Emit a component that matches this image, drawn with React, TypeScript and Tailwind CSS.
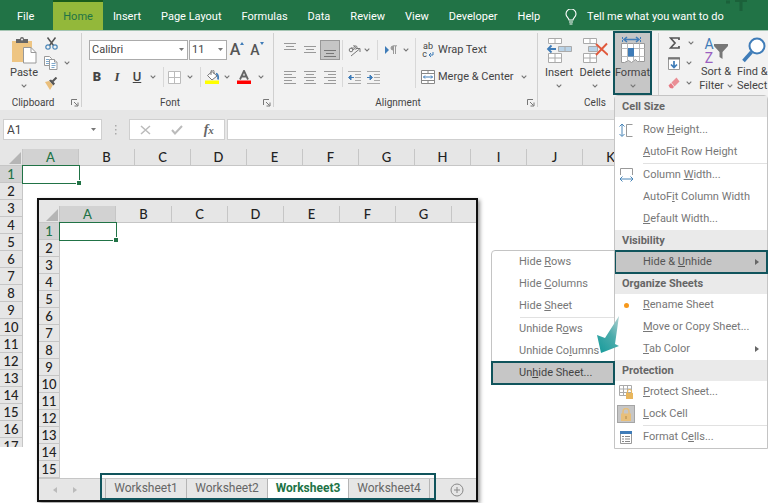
import React, { useState } from 'react';
import clsx from 'clsx';

type MenuEntry =
  | { type: 'header'; label: string; first?: boolean }
  | { type: 'separator' }
  | { type: 'item'; label: string; hot: number; icon?: React.ReactNode; arrow?: boolean; pressed?: boolean; submenu?: boolean };

const RIBBON_TABS = ['File', 'Home', 'Insert', 'Page Layout', 'Formulas', 'Data', 'Review', 'View', 'Developer', 'Help'];
const SHEET_COLUMNS = ['A', 'B', 'C', 'D', 'E', 'F', 'G', 'H', 'I', 'J', 'K'];
const WINDOW_COLUMNS = ['A', 'B', 'C', 'D', 'E', 'F', 'G', ''];
const WORKSHEETS = ['Worksheet1', 'Worksheet2', 'Worksheet3', 'Worksheet4'];

/* ---------- icons ---------- */

const Chevron = () => (
  <svg width="6" height="4" viewBox="0 0 6 4" fill="none" stroke="#777" strokeWidth="1.1">
    <path d="M.7.7 3 3 5.3.7" />
  </svg>
);

const Caret = () => (
  <svg width="5" height="3" viewBox="0 0 5 3" fill="#777">
    <path d="M0 0h5L2.500 3z" />
  </svg>
);

const LauncherIcon = () => (
  <svg width="8" height="8" viewBox="0 0 8 8" fill="none" stroke="#777">
    <path d="M.5 6V.5H6M3 3l3.500 3.500M7 3.500V7H3.500" />
  </svg>
);

const PasteIcon = () => (
  <svg width="26" height="27" viewBox="0 0 26 27">
    <path d="M1 4h20v21H1z" fill="#eec583" />
    <path d="M5 2h4a2 2 0 0 1 4 0h4v4H5z" fill="#666" />
    <circle cx="11" cy="2.500" r="1" fill="#f2f2f2" />
    <path d="M12.500 10.500h7.500l5 5v10.500H12.500z" fill="#fff" stroke="#999" />
    <path d="M20 10.500v5h5" fill="none" stroke="#999" />
  </svg>
);

const CutIcon = () => (
  <svg width="13" height="13" viewBox="0 0 13 13" fill="none">
    <path d="M2.500.5 8.500 8.500M10.500.5 4.500 8.500" stroke="#555" strokeWidth="1.500" />
    <circle cx="3" cy="10" r="2.200" stroke="#4a86b8" strokeWidth="1.200" />
    <circle cx="10" cy="10" r="2.200" stroke="#4a86b8" strokeWidth="1.200" />
  </svg>
);

const CopyIcon = () => (
  <svg width="14" height="14" viewBox="0 0 14 14" fill="#fff" stroke="#999">
    <path d="M.5.5h5l2 2v7h-7z" />
    <path d="M2 3.500h3M2 5.500h3M2 7.500h3" stroke="#7fa9cc" />
    <path d="M5.500 3.500h5l2.500 2.500v7.500H5.500z" />
    <path d="M10.500 3.500V6H13" />
    <path d="M7.500 7.500h4M7.500 9.500h4M7.500 11.500h3" stroke="#7fa9cc" />
  </svg>
);

const BrushIcon = () => (
  <svg width="14" height="13" viewBox="0 0 14 13">
    <path d="m1 5 4-1 4 4-3 5z" fill="#eabf7c" />
    <path d="m5 3.500 2-1 4 4-1.500 2z" fill="#555" />
    <path d="m8.500 4.500 4-4" stroke="#555" strokeWidth="2" />
  </svg>
);

const BordersIcon = () => (
  <svg width="13" height="13" viewBox="0 0 13 13" fill="#fff" stroke="#bbb">
    <path d="M.5.5h12v12H.5zM6.500.5v12M.5 6.500h12" />
  </svg>
);

const FillIcon = () => (
  <svg width="15" height="14" viewBox="0 0 15 14">
    <path d="m2.500 5.500 4.500-4 5 4.500-5 4z" fill="#fff" stroke="#777" />
    <path d="M6 5V1.500a1.500 1.500 0 0 1 3 0V4" fill="none" stroke="#777" />
    <path d="M11 3.500c2 .5 2.500 2.500 2 6" fill="none" stroke="#3f7cb8" strokeWidth="1.800" />
    <path d="M0 10.500h14v3.500H0z" fill="#ffff00" />
  </svg>
);

const FontColorIcon = () => (
  <svg width="14" height="14" viewBox="0 0 14 14">
    <path d="M3 9.500 7 .8l4 8.700M4.500 6.500h5" fill="none" stroke="#666" strokeWidth="1.800" />
    <path d="M0 10.500h14v3.500H0z" fill="#f00" />
  </svg>
);

const FontSizeIcon = ({ grow }: { grow?: boolean }) => (
  <span className="flex items-start">
    <span className={clsx('font-medium leading-4 text-[#555]', grow ? 'text-base' : 'text-sm')}>A</span>
    <svg width="4" height="3" viewBox="0 0 4 3" fill="#3f7cb8">
      <path d={grow ? 'M0 3h4L2 0z' : 'M0 0h4L2 3z'} />
    </svg>
  </span>
);

const LinesIcon = ({ rows, color = '#999' }: { rows: [number, number, number][]; color?: string }) => (
  <svg width="12" height="14" viewBox="0 0 12 14" stroke={color}>
    {rows.map(([x1, x2, y]) => (
      <path key={y} d={`M${x1} ${y}H${x2}`} />
    ))}
  </svg>
);

const IndentIcon = ({ increase }: { increase?: boolean }) => (
  <svg width="13" height="14" viewBox="0 0 13 14" fill="none">
    <path d="M0 1.500h13M7 4.500h6M7 7.500h6M7 10.500h6M0 13.500h13" stroke="#aaa" />
    {increase ? (
      <path d="M0 7.500h3M3 5l2.500 2.500L3 10z" fill="#3f7cb8" stroke="#3f7cb8" />
    ) : (
      <path d="M6 7.500H3M3 5 .5 7.500 3 10z" fill="#3f7cb8" stroke="#3f7cb8" />
    )}
  </svg>
);

const OrientationIcon = () => (
  <svg width="13" height="13" viewBox="0 0 13 13" fill="none" stroke="#777">
    <circle cx="3" cy="6" r="1.800" />
    <path d="m3.500 3 2.500 3M5.500 1l3.500 4" />
    <circle cx="7.500" cy="3.500" r="1.600" />
    <path d="m3 12 8.500-7M12 8V4.500H8.500" />
  </svg>
);

const DirectionIcon = () => (
  <svg width="12" height="10" viewBox="0 0 12 10">
    <path d="m0 1 4 4-4 4z" fill="#3f7cb8" />
    <path d="M8 1a2 2 0 0 0 0 4z" fill="#999" stroke="#999" />
    <path d="M8.500 1v8M10.500 1v8M8 .8h4" stroke="#999" fill="none" />
  </svg>
);

const WrapIcon = () => (
  <span className="flex flex-col text-[9px] leading-[8px] text-[#444]">
    <span>ab</span>
    <span className="flex items-end gap-px">
      c
      <svg width="6" height="6" viewBox="0 0 6 6" fill="none" stroke="#3f7cb8">
        <path d="M5 0v3H1M3 1 1 3l2 2" />
      </svg>
    </span>
  </span>
);

const MergeIcon = () => (
  <svg width="14" height="14" viewBox="0 0 14 14" fill="#fff" stroke="#888">
    <path d="M.5.5h13v13H.5zM.5 3.500h13M.5 10.500h13M7 .5v3M7 10.500v3" />
    <path d="M2.500 7h9M4 5.500 2.500 7 4 8.500M10 5.500 11.500 7 10 8.500" stroke="#3f7cb8" fill="none" />
  </svg>
);

const InsertCellsIcon = () => (
  <svg width="26" height="27" viewBox="0 0 26 27" fill="#fff" stroke="#aaa">
    <path d="M2.500 1.500h13v5h-13zM9 1.500v5M2.500 16.500h13v9h-13zM9 16.500v9M2.500 21h13" />
    <path d="M12.500 9.500h13v5h-13zM19 9.500v5" fill="#b9d3e8" />
    <path d="M10 12H2M5.500 8.500 2 12l3.500 3.500" stroke="#3f7cb8" strokeWidth="1.800" fill="none" />
  </svg>
);

const DeleteCellsIcon = () => (
  <svg width="26" height="27" viewBox="0 0 26 27" fill="#fff" stroke="#aaa">
    <path d="M1.500 1.500h13v5h-13zM8 1.500v5M1.500 16.500h13v9h-13zM8 16.500v9M1.500 21h13" />
    <path d="M6.500 9.500h9v5h-9z" fill="#b9d3e8" />
    <path d="m14 7 12 11M25 6.500 14 18" stroke="#e0593c" strokeWidth="1.900" fill="none" />
  </svg>
);

const FormatCellsIcon = () => (
  <svg width="26" height="28" viewBox="0 0 26 28" fill="none">
    <path d="M2.500 1v5M20.500 1v5" stroke="#3f7cb8" strokeDasharray="2 1" />
    <path d="M4 3.500h15M7 1 4 3.500 7 6M16 1l3 2.500L16 6" stroke="#3f7cb8" strokeWidth="1.500" />
    <path d="M1.500 7.500h23v18h-7l-2-2-4 3-3-2-4 2H1.500z" fill="#fff" stroke="#999" />
    <path d="M7.500 7.500v18M13.500 7.500v17M19.500 7.500v18M1.500 12.500h23M1.500 20.500h23" stroke="#bbb" />
    <path d="M8 12h6v8.500H8z" fill="#3f7cb8" />
  </svg>
);

const SigmaIcon = () => (
  <svg width="11" height="12" viewBox="0 0 11 12" fill="none" stroke="#555" strokeWidth="1.700">
    <path d="M10 3V1H1.500L6 6l-4.500 5H10V9" />
  </svg>
);

const FillDownIcon = () => (
  <svg width="12" height="13" viewBox="0 0 12 13" fill="#fff" stroke="#999">
    <path d="M.5.5h11v12H.5z" />
    <path d="M0 1.500h12" stroke="#777" strokeWidth="2" />
    <path d="M6 4v6M3 7.500l3 3 3-3" stroke="#3f7cb8" strokeWidth="1.700" fill="none" />
  </svg>
);

const EraserIcon = () => (
  <svg width="12" height="12" viewBox="0 0 12 12">
    <path d="m3.500 5.500 5-5 3 4-5 5z" fill="#ea8f96" />
    <path d="m3 6 3 4-1.500 1.500-2.500-.5L.5 8.500z" fill="#e77983" />
  </svg>
);

const SortFilterIcon = () => (
  <span className="flex h-7 items-center">
    <span className="flex flex-col text-sm leading-[14px]">
      <span className="text-[#3f7cb8]">A</span>
      <span className="text-[#9a5fc0]">Z</span>
    </span>
    <svg width="14" height="15" viewBox="0 0 14 15" fill="#777">
      <path d="M0 0h14v2L8.500 8v7L5.500 13V8L0 2z" />
    </svg>
  </span>
);

const FindIcon = () => (
  <svg width="24" height="26" viewBox="0 0 24 26" fill="none" stroke="#3f7cb8">
    <circle cx="15" cy="9" r="7.500" fill="#fff" strokeWidth="2" />
    <path d="m9.500 15-8 9" strokeWidth="3.500" />
  </svg>
);

const BulbIcon = () => (
  <svg width="12" height="16" viewBox="0 0 12 16" fill="none" stroke="#fff" strokeWidth="1.100">
    <path d="M4 11C4 9 1 8 1 5a5 5 0 0 1 10 0c0 3-3 4-3 6zM4 13h4M4.500 15h3" />
  </svg>
);

const RowHeightIcon = () => (
  <svg width="14" height="15" viewBox="0 0 14 15" fill="none">
    <path d="M3 1v12M.5 3.500 3 1l2.500 2.500M.5 11 3 13.500 5.500 11" stroke="#4a86b8" />
    <path d="M13.500 1.500h-6v12h6" stroke="#999" />
  </svg>
);

const ColumnWidthIcon = () => (
  <svg width="15" height="14" viewBox="0 0 15 14" fill="none">
    <path d="M1.500 7V.5h12V7" stroke="#999" />
    <path d="M1 11h13M3.500 8.500 1 11l2.500 2.500M11.500 8.500 14 11l-2.500 2.500" stroke="#4a86b8" />
  </svg>
);

const ProtectIcon = () => (
  <svg width="14" height="14" viewBox="0 0 14 14" fill="none">
    <path d="M.5.5h12v10H.5zM4.500.5v10M8.500.5v10M.5 4h12M.5 7.500h12" stroke="#aaa" />
    <path d="M7 8h7v6H7z" fill="#e8b65d" />
    <path d="M8.500 8V6.500a2 2 0 0 1 4 0V8" stroke="#e8b65d" strokeWidth="1.200" />
  </svg>
);

const LockIcon = () => (
  <svg width="10" height="13" viewBox="0 0 10 13" fill="none">
    <path d="M0 5.500h10V13H0z" fill="#e8bf7a" />
    <path d="M2 6V3.500a3 3 0 0 1 6 0V6" stroke="#e8bf7a" strokeWidth="1.500" />
    <path d="M5 8v3" stroke="#b08a4a" />
  </svg>
);

const FormatDialogIcon = () => (
  <svg width="12" height="13" viewBox="0 0 12 13" fill="#fff">
    <path d="M.5.5h11v12H.5z" stroke="#999" />
    <path d="M0 0h12v3H0z" fill="#3f7cb8" />
    <path d="M2 5.500h2M5 5.500h5M2 8h2M5 8h5M2 10.500h2M5 10.500h5" stroke="#888" />
  </svg>
);

/* ---------- ribbon ---------- */

interface ToolProps {
  label: string;
  className: string;
  children: React.ReactNode;
}

const Tool = ({ label, className, children }: ToolProps) => (
  <button aria-label={label} className={clsx('flex h-5 shrink-0 items-center justify-center', className)}>
    {children}
  </button>
);

const Divider = ({ className }: { className: string }) => (
  <div className={clsx('flex h-5 shrink-0 justify-center', className)}>
    <div className="w-px bg-[#d8d8d8]" />
  </div>
);

interface GroupProps {
  label: string;
  className?: string;
  launcher?: boolean;
  children: React.ReactNode;
}

const Group = ({ label, className, launcher, children }: GroupProps) => (
  <section aria-label={label} className={clsx('flex shrink-0 flex-col', className)}>
    <div className="flex h-16">{children}</div>
    <div className="flex h-[15px] items-center text-[10px] leading-[15px]">
      <span className="flex-1 text-center">{label}</span>
      {launcher && (
        <button aria-label={`${label} settings`} className="flex w-[15px] items-center justify-end pr-[2px]">
          <LauncherIcon />
        </button>
      )}
    </div>
  </section>
);

const GroupLine = () => <div className="mt-[2px] mb-[3px] w-px shrink-0 bg-[#d0d0d0]" />;

interface BigButtonProps {
  icon: React.ReactNode;
  label: string;
  className?: string;
}

const BigButton = ({ icon, label, className }: BigButtonProps) => (
  <button className={clsx('flex h-16 shrink-0 flex-col items-center', className)}>
    <span className="flex h-[33px] items-end">{icon}</span>
    <span className="h-[18px] whitespace-nowrap leading-[18px]">{label}</span>
    <span className="pt-[2px]">
      <Chevron />
    </span>
  </button>
);

/* ---------- format menu ---------- */

const HotLabel = ({ label, hot }: { label: string; hot: number }) => (
  <span className="whitespace-nowrap">
    {label.slice(0, hot)}
    <span className="underline">{label[hot]}</span>
    {label.slice(hot + 1)}
  </span>
);

const FORMAT_MENU: MenuEntry[] = [
  { type: 'header', label: 'Cell Size', first: true },
  { type: 'item', label: 'Row Height...', hot: 4, icon: <RowHeightIcon /> },
  { type: 'item', label: 'AutoFit Row Height', hot: 0 },
  { type: 'separator' },
  { type: 'item', label: 'Column Width...', hot: 7, icon: <ColumnWidthIcon /> },
  { type: 'item', label: 'AutoFit Column Width', hot: 5 },
  { type: 'item', label: 'Default Width...', hot: 0 },
  { type: 'header', label: 'Visibility' },
  { type: 'item', label: 'Hide & Unhide', hot: 7, arrow: true, submenu: true },
  { type: 'header', label: 'Organize Sheets' },
  { type: 'item', label: 'Rename Sheet', hot: 0, icon: <span className="size-[5px] rounded-full bg-[#f7991c]" /> },
  { type: 'item', label: 'Move or Copy Sheet...', hot: 0 },
  { type: 'item', label: 'Tab Color', hot: 0, arrow: true },
  { type: 'header', label: 'Protection' },
  { type: 'item', label: 'Protect Sheet...', hot: 0, icon: <ProtectIcon /> },
  { type: 'item', label: 'Lock Cell', hot: 0, icon: <LockIcon />, pressed: true },
  { type: 'separator' },
  { type: 'item', label: 'Format Cells...', hot: 8, icon: <FormatDialogIcon /> },
];

const HIDE_MENU: MenuEntry[] = [
  { type: 'item', label: 'Hide Rows', hot: 5 },
  { type: 'item', label: 'Hide Columns', hot: 5 },
  { type: 'item', label: 'Hide Sheet', hot: 5 },
  { type: 'separator' },
  { type: 'item', label: 'Unhide Rows', hot: 8 },
  { type: 'item', label: 'Unhide Columns', hot: 9 },
  { type: 'item', label: 'Unhide Sheet...', hot: 2 },
];

const HideSubmenu = () => (
  <ul className="absolute -top-px right-full w-[124px] rounded-tl border border-[#c4c4c4] bg-white text-[#777]">
    {HIDE_MENU.map((entry, i) => {
      if (entry.type !== 'item') {
        return <li key={i} className="ml-7 h-px bg-[#e1e1e1]" />;
      }
      const active = entry.label === 'Unhide Sheet...';
      return (
        <li key={i}>
          <button
            className={clsx(
              'flex h-[22px] w-full items-center pl-[27px] text-left',
              active && 'bg-[#c6c6c6] text-[#444] outline-2 -outline-offset-1 outline-[#10545c]'
            )}
          >
            <HotLabel label={entry.label} hot={entry.hot} />
          </button>
        </li>
      );
    })}
    <li aria-hidden="true" className="pointer-events-none absolute bottom-[30px] -right-[6px]">
      <svg width="24" height="38" viewBox="0 0 24 38">
        <defs>
          <linearGradient id="pointer" x1="1" y1="0" x2=".3" y2="1">
            <stop offset="0" stopColor="#b5d3d3" />
            <stop offset=".5" stopColor="#4dacac" />
            <stop offset="1" stopColor="#1f9e9e" />
          </linearGradient>
        </defs>
        <path d="M23 0 9 22 1 19l4 18 18-7-4-2z" fill="url(#pointer)" />
      </svg>
    </li>
  </ul>
);

const FormatMenu = () => (
  <ul className="absolute left-px top-full z-20 w-[154px] rounded-t border border-[#c4c4c4] bg-white text-[#777]">
    {FORMAT_MENU.map((entry, i) => {
      if (entry.type === 'header') {
        return (
          <li
            key={i}
            className={clsx('flex h-[21px] items-center bg-[#eaeaea] pl-[7px] font-bold text-[#666]', entry.first && 'mb-[2px]')}
          >
            {entry.label}
          </li>
        );
      }
      if (entry.type === 'separator') {
        return <li key={i} className="ml-7 h-px bg-[#e1e1e1]" />;
      }
      return (
        <li key={i} className="relative">
          <button
            className={clsx(
              'flex h-[22px] w-full items-center text-left',
              entry.submenu && 'bg-[#c6c6c6] text-[#555] outline-2 -outline-offset-1 outline-[#10545c]'
            )}
          >
            <span
              className={clsx(
                'ml-[2px] mr-[8px] flex h-[18px] w-[18px] shrink-0 items-center justify-center',
                entry.pressed && 'border border-[#a5a5a5] bg-[#c6c6c6]'
              )}
            >
              {entry.icon}
            </span>
            <span className="flex-1">
              <HotLabel label={entry.label} hot={entry.hot} />
            </span>
            {entry.arrow && (
              <svg className="mr-[8px]" width="4" height="6" viewBox="0 0 4 6" fill="#666">
                <path d="m0 0 4 3-4 3z" />
              </svg>
            )}
          </button>
          {entry.submenu && <HideSubmenu />}
        </li>
      );
    })}
  </ul>
);

/* ---------- grids ---------- */

interface GridProps {
  columns: string[];
  rowCount: number;
  headWidth: string;
}

const Grid = ({ columns, rowCount, headWidth }: GridProps) => (
  <table className="w-max table-fixed border-separate border-spacing-0 font-['Lato','Liberation_Sans',sans-serif] text-[13px] leading-4 text-[#222]">
    <thead>
      <tr className="h-[17px]">
        <th className={clsx('border-b border-r border-[#c6c6c6] bg-[#e6e6e6] p-0 align-bottom', headWidth)}>
          <svg className="ml-auto mr-px mb-px" width="12" height="12" viewBox="0 0 12 12" fill="#b5b5b5">
            <path d="M12 0v12H0z" />
          </svg>
        </th>
        {columns.map((col, i) => (
          <th
            key={i}
            scope="col"
            className={clsx(
              'w-14 min-w-14 border-b border-r border-r-[#c6c6c6] p-0 font-medium',
              i === 0 ? 'border-b-[#217346] bg-[#d2d2d2] text-[#217346]' : 'border-b-[#c6c6c6] bg-[#e6e6e6]'
            )}
          >
            {col}
          </th>
        ))}
      </tr>
    </thead>
    <tbody>
      {Array.from({ length: rowCount }, (_, r) => (
        <tr key={r} className="h-[17px]">
          <th
            scope="row"
            className={clsx(
              'border-b border-r border-[#c6c6c6] p-0 font-medium',
              r === 0 ? 'bg-[#d2d2d2] text-[#217346]' : 'bg-[#e6e6e6]'
            )}
          >
            {r + 1}
          </th>
          {columns.map((_, c) => (
            <td key={c} className="bg-white p-0">
              {r === 0 && c === 0 && (
                <div className="relative h-[17px] outline-1 outline-[#217346]">
                  <span className="absolute -bottom-[2px] -right-[2px] size-[4px] bg-[#217346] outline-1 outline-white" />
                </div>
              )}
            </td>
          ))}
        </tr>
      ))}
    </tbody>
  </table>
);

const SheetWindow = () => {
  const [activeSheet, setActiveSheet] = useState('Worksheet3');

  return (
    <div className="absolute left-[37px] top-[49px] w-[441px] border-2 border-[#111] bg-white shadow-[2px_2px_4px_rgba(0,0,0,0.4)]">
      <div className="overflow-hidden bg-[#e6e6e6] pt-[6px]">
        <Grid columns={WINDOW_COLUMNS} rowCount={15} headWidth="w-[21px] min-w-[21px]" />
      </div>
      <div className="flex h-[22px] items-stretch border-t border-[#c6c6c6] bg-[#e6e6e6] text-xs text-[#666]">
        <button aria-label="Previous sheet" className="ml-[11px] w-[10px]">
          <svg width="4" height="6" viewBox="0 0 4 6" fill="#bbb" className="mx-auto">
            <path d="M4 0v6L0 3z" />
          </svg>
        </button>
        <button aria-label="Next sheet" className="ml-[10px] mr-[25px] w-[10px]">
          <svg width="4" height="6" viewBox="0 0 4 6" fill="#bbb" className="mx-auto">
            <path d="M0 0v6l4-3z" />
          </svg>
        </button>
        <div className="relative flex border-l border-[#b5b5b5]" role="tablist">
          {/* frame around the sheet tabs, white where it rises above the bar */}
          <div className="pointer-events-none absolute -inset-x-[6px] -top-[6px] bottom-0 border-2 border-[#10545c]" />
          {WORKSHEETS.map(name => (
            <button
              key={name}
              role="tab"
              aria-selected={activeSheet === name}
              onClick={() => setActiveSheet(name)}
              className={clsx(
                'w-[81px] border-r border-[#b5b5b5] pb-1',
                activeSheet === name && 'bg-white font-bold text-[#217346]'
              )}
            >
              {name}
            </button>
          ))}
        </div>
        <button aria-label="New sheet" className="ml-5">
          <svg width="14" height="14" viewBox="0 0 14 14" fill="none" stroke="#888">
            <circle cx="7" cy="7" r="6" />
            <path d="M7 4v6M4 7h6" />
          </svg>
        </button>
      </div>
    </div>
  );
};

export default function App() {
  const [activeTab, setActiveTab] = useState('Home');
  const [wrapText, setWrapText] = useState(false);

  return (
    <div className="min-h-screen overflow-hidden bg-white font-['Roboto','Noto_Sans',sans-serif] text-[11px] leading-4 text-[#444]">
      <nav className="flex h-[31px] items-stretch border-b border-[#a5c5b3] bg-[#217346] text-white">
        {RIBBON_TABS.map(tab => (
          <button
            key={tab}
            onClick={() => setActiveTab(tab)}
            className={clsx(
              'shrink-0 border-t-2 px-[10px] pt-[2px]',
              tab === 'File' && 'pl-[17px] mr-[9px]',
              activeTab === tab ? 'border-[#185c1c] bg-[#93b83a] text-[#217346]' : 'border-transparent'
            )}
          >
            {tab}
          </button>
        ))}
        <button className="ml-[15px] flex shrink-0 items-center gap-[10px] pt-[3px]">
          <BulbIcon />
          Tell me what you want to do
        </button>
        {/* circuit decoration at the end of the title strip */}
        <svg className="ml-auto shrink-0" width="42" height="11" viewBox="0 0 42 11" fill="none" stroke="#1b613a" strokeWidth="3">
          <path d="M0 2h4M9 .5h12M15 0v11" />
        </svg>
      </nav>

      <div className="flex h-[79px] bg-[#f2f2f2]">
        <Group label="Clipboard" launcher className="w-[81px]">
          <BigButton icon={<PasteIcon />} label="Paste" className="ml-[6px] w-9" />
          <div className="flex flex-col pt-[2px]">
            <Tool label="Cut" className="w-[18px]"><CutIcon /></Tool>
            <div className="flex">
              <Tool label="Copy" className="w-[18px]"><CopyIcon /></Tool>
              <Tool label="Copy options" className="w-[14px]"><Chevron /></Tool>
            </div>
            <Tool label="Format Painter" className="w-[18px]"><BrushIcon /></Tool>
          </div>
        </Group>
        <GroupLine />

        <Group label="Font" launcher className="w-[191px]">
          <div className="flex flex-col gap-[7px] pl-[5px] pt-[9px]">
            <div className="flex items-center pl-[2px]">
              <label className="relative">
                <select aria-label="Font family" className="block h-5 w-[99px] appearance-none border border-[#ababab] bg-white pl-[2px]">
                  <option>Calibri</option>
                </select>
                <span className="pointer-events-none absolute right-1 top-2"><Caret /></span>
              </label>
              <label className="relative ml-px">
                <select aria-label="Font size" className="block h-5 w-[38px] appearance-none border border-[#ababab] bg-white pl-[2px]">
                  <option>11</option>
                </select>
                <span className="pointer-events-none absolute right-1 top-2"><Caret /></span>
              </label>
              <Tool label="Increase font size" className="w-5"><FontSizeIcon grow /></Tool>
              <Tool label="Decrease font size" className="w-5"><FontSizeIcon /></Tool>
            </div>
            <div className="flex items-center text-[13px]">
              <Tool label="Bold" className="w-5 font-black">B</Tool>
              <Tool label="Italic" className="w-5 font-['Liberation_Serif',serif] font-bold italic">I</Tool>
              <Tool label="Underline" className="w-5 font-medium underline">U</Tool>
              <Tool label="Underline options" className="w-3"><Chevron /></Tool>
              <Divider className="w-[8px]" />
              <Tool label="Borders" className="w-[15px]"><BordersIcon /></Tool>
              <Tool label="Border options" className="w-4"><Chevron /></Tool>
              <Divider className="w-[5px]" />
              <Tool label="Fill color" className="w-[18px]"><FillIcon /></Tool>
              <Tool label="Fill options" className="w-3"><Chevron /></Tool>
              <Tool label="Font color" className="w-[22px]"><FontColorIcon /></Tool>
              <Tool label="Font color options" className="w-3"><Chevron /></Tool>
            </div>
          </div>
        </Group>
        <GroupLine />

        <Group label="Alignment" launcher className="w-[263px]">
          <div className="flex flex-col gap-[7px] pl-[6px] pt-[9px]">
            <div className="flex">
              <Tool label="Top align" className="w-5">
                <LinesIcon rows={[[0, 12, 0.5], [2, 10, 3.5], [0, 12, 6.5]]} />
              </Tool>
              <Tool label="Middle align" className="w-5">
                <LinesIcon rows={[[0, 12, 3.5], [2, 10, 6.5], [0, 12, 9.5]]} />
              </Tool>
              <Tool label="Bottom align" className="w-5 border border-[#999] bg-[#c6c6c6]">
                <LinesIcon color="#777" rows={[[0, 12, 7.5], [2, 10, 10.5], [0, 12, 13.5]]} />
              </Tool>
              <Divider className="w-[5px]" />
              <Tool label="Orientation" className="w-[18px]"><OrientationIcon /></Tool>
              <Tool label="Orientation options" className="w-2"><Chevron /></Tool>
              <Divider className="w-[13px]" />
              <Tool label="Text direction" className="w-[14px]"><DirectionIcon /></Tool>
              <Tool label="Text direction options" className="w-[15px]"><Chevron /></Tool>
            </div>
            <div className="flex">
              <Tool label="Align left" className="w-5">
                <LinesIcon rows={[[0, 12, 1.5], [0, 8, 4.5], [0, 12, 7.5], [0, 8, 10.5], [0, 12, 13.5]]} />
              </Tool>
              <Tool label="Center" className="w-5">
                <LinesIcon rows={[[0, 12, 1.5], [2, 10, 4.5], [0, 12, 7.5], [2, 10, 10.5], [0, 12, 13.5]]} />
              </Tool>
              <Tool label="Align right" className="w-5">
                <LinesIcon rows={[[0, 12, 1.5], [4, 12, 4.5], [0, 12, 7.5], [4, 12, 10.5], [0, 12, 13.5]]} />
              </Tool>
              <Divider className="w-[5px]" />
              <Tool label="Decrease indent" className="w-[18px]"><IndentIcon /></Tool>
              <Tool label="Increase indent" className="w-5"><IndentIcon increase /></Tool>
            </div>
          </div>
          <div className="mx-[2px] my-[7px] w-px bg-[#d8d8d8]" />
          <div className="flex flex-col gap-[7px] pl-[3px] pt-[9px]">
            <button aria-pressed={wrapText} onClick={() => setWrapText(!wrapText)} className="flex h-5 items-center gap-[3px] whitespace-nowrap">
              <span className="flex w-[14px] justify-center"><WrapIcon /></span>
              Wrap Text
            </button>
            <div className="flex">
              <button className="flex h-5 items-center gap-[3px] whitespace-nowrap">
                <MergeIcon />
                Merge &amp; Center
              </button>
              <Tool label="Merge options" className="w-5"><Chevron /></Tool>
            </div>
          </div>
        </Group>
        <GroupLine />

        <Group label="Cells" className="w-[120px] pr-[6px]">
          <BigButton icon={<InsertCellsIcon />} label="Insert" className="ml-[3px] w-9" />
          <BigButton icon={<DeleteCellsIcon />} label="Delete" className="w-9" />
          <div className="relative shrink-0">
            <BigButton
              icon={<FormatCellsIcon />}
              label="Format"
              className="w-[39px] bg-[#c6c6c6] outline-2 -outline-offset-2 outline-[#10545c]"
            />
            <FormatMenu />
          </div>
        </Group>
        <GroupLine />

        <div className="flex min-w-0 flex-1">
          <div className="flex shrink-0 flex-col pl-1 pt-[2px]">
            <div className="flex">
              <Tool label="AutoSum" className="w-[22px]"><SigmaIcon /></Tool>
              <Tool label="AutoSum options" className="w-3"><Chevron /></Tool>
            </div>
            <div className="flex">
              <Tool label="Fill" className="w-[22px]"><FillDownIcon /></Tool>
              <Tool label="Fill direction" className="w-2"><Chevron /></Tool>
            </div>
            <div className="flex">
              <Tool label="Clear" className="w-[22px]"><EraserIcon /></Tool>
              <Tool label="Clear options" className="w-2"><Chevron /></Tool>
            </div>
          </div>
          <button className="flex h-16 w-[38px] shrink-0 flex-col items-center whitespace-nowrap leading-[14px]">
            <span className="flex h-[34px] items-end"><SortFilterIcon /></span>
            <span>Sort &amp;</span>
            <span className="flex items-center gap-[3px]">Filter <Chevron /></span>
          </button>
          <button className="ml-[2px] flex h-16 shrink-0 flex-col whitespace-nowrap leading-[14px]">
            <span className="flex h-[34px] items-center pl-[5px] pt-[3px]"><FindIcon /></span>
            <span className="text-left">Find &amp;</span>
            <span className="flex items-center gap-[3px]">Select <Chevron /></span>
          </button>
        </div>
      </div>

      <div className="flex h-[39px] bg-[#e6e6e6] pb-[9px] pl-[3px] pt-[9px]">
        <div className="flex w-[99px] items-center border border-[#cfcfcf] bg-white">
          <input aria-label="Name box" defaultValue="A1" className="min-w-0 flex-1 bg-transparent pl-[3px] text-xs outline-none" />
          <button aria-label="Named cells" className="px-[5px]"><Caret /></button>
        </div>
        <svg className="mx-[11px] self-center" width="5" height="10" viewBox="0 0 5 10" fill="#aaa">
          <path d="M2 0h1.500v1.500H2zM2 4h1.500v1.500H2zM2 8h1.500v1.500H2z" />
        </svg>
        <div className="flex w-24 items-center justify-around border border-[#cfcfcf] bg-white">
          <button aria-label="Cancel">
            <svg width="11" height="10" viewBox="0 0 11 10" stroke="#bbb" strokeWidth="1.500">
              <path d="m1 1 9 8M10 1 1 9" />
            </svg>
          </button>
          <button aria-label="Enter">
            <svg width="12" height="10" viewBox="0 0 12 10" fill="none" stroke="#bbb" strokeWidth="2">
              <path d="m1 5 3 3.500L11 1" />
            </svg>
          </button>
          <button aria-label="Insert function" className="font-['Liberation_Serif',serif] text-sm font-bold italic text-[#666]">
            f<span className="text-[11px]">x</span>
          </button>
        </div>
        <input aria-label="Formula bar" className="ml-[2px] min-w-0 flex-1 border border-r-0 border-[#cfcfcf] bg-white px-2 outline-none" />
      </div>

      <main className="relative">
        <div className="h-[298px] overflow-hidden">
          <Grid columns={SHEET_COLUMNS} rowCount={17} headWidth="w-[23px] min-w-[23px]" />
        </div>
        <SheetWindow />
      </main>
    </div>
  );
}
